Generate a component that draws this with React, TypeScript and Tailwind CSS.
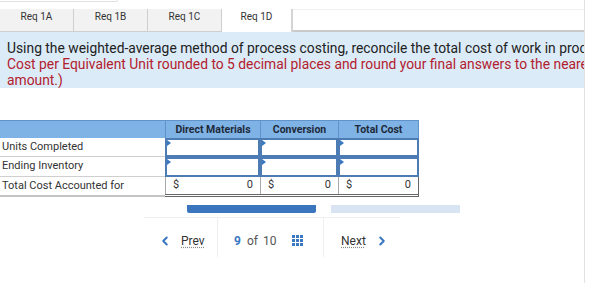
import { ChevronLeft, ChevronRight } from 'lucide-react';

const tabs = ['Req 1A', 'Req 1B', 'Req 1C', 'Req 1D'];

function InputCell() {
  return (
    <div className="relative h-full border-2 border-[#4d7bb3] bg-white">
      <span className="absolute left-0 top-0 h-0 w-0 border-y-[3px] border-l-[4px] border-y-transparent border-l-[#3a78c2]" />
    </div>
  );
}

function TotalCell() {
  return (
    <div className="flex h-full items-center justify-between border-l border-[#a9a9a9] px-[7px] text-[11px] text-[#333]">
      <span>$</span>
      <span>0</span>
    </div>
  );
}

function GridIcon() {
  return (
    <svg width="12" height="12" viewBox="0 0 12 12" className="fill-[#3a78c2]">
      {[0, 4, 8].map((y) =>
        [0, 4, 8].map((x) => <rect key={`${x}-${y}`} x={x} y={y} width="3" height="3" />)
      )}
    </svg>
  );
}

export default function App() {
  return (
    <div className="h-[283px] w-[589px] overflow-hidden bg-white font-['Roboto',sans-serif]">
      <div className="h-[283px] w-[585px] overflow-hidden border-r border-[#e2e2e2]">
        {/* leftover of box above */}
        <div className="h-[9px]">
          <div className="h-[2px] w-[118px] rounded-br border-b border-r border-[#e0e0e0]" />
        </div>

        {/* tabs */}
        <div className="flex h-[23px]">
          {tabs.map((t, i) => (
            <div
              key={t}
              className={
                i === 3
                  ? 'w-[71px] border-r-2 border-[#d4d4d4] bg-white text-center text-[10px] text-[#333]'
                  : 'w-[74px] border-b border-r border-[#cfcfcf] bg-[#f2f2f2] text-center text-[10px] text-[#333]'
              }
            >
              {t}
            </div>
          ))}
          <div className="flex-1 border-b-2 border-t border-b-[#c9c9c9] border-t-[#f0f0f0] bg-white" />
        </div>

        {/* instructions */}
        <div className="h-[56px] overflow-hidden bg-[#dcebf8] pl-[7px] pt-[8px] text-[13.85px] leading-[16px]">
          <p className="whitespace-nowrap text-[#222]">
            Using the weighted-average method of process costing, reconcile the total cost of work in process.
          </p>
          <p className="whitespace-nowrap text-[#b3202e]">
            Cost per Equivalent Unit rounded to 5 decimal places and round your final answers to the nearest dollar
          </p>
          <p className="text-[#b3202e]">amount.)</p>
        </div>

        {/* table */}
        <div className="mt-[32px] grid w-[419px] grid-cols-[165px_95px_78px_81px] grid-rows-[18px_19px_20px_20px]">
          <div className="border-t border-[#5f93c9] bg-[#7fb2e5]" />
          <div className="flex items-center justify-center border-l border-t border-[#5f93c9] bg-[#7fb2e5] text-[10.5px] font-bold text-[#1e2a3a]">
            Direct Materials
          </div>
          <div className="flex items-center justify-center border-l border-t border-[#5f93c9] bg-[#7fb2e5] text-[10.5px] font-bold text-[#1e2a3a]">
            Conversion
          </div>
          <div className="flex items-center justify-center border-l border-r border-t border-[#5f93c9] bg-[#7fb2e5] text-[10.5px] font-bold text-[#1e2a3a]">
            Total Cost
          </div>

          <div className="flex items-center border-b border-[#cfcfcf] pl-[2px] text-[11px] text-[#333]">Units Completed</div>
          <InputCell />
          <InputCell />
          <InputCell />

          <div className="flex items-center border-b border-[#cfcfcf] pl-[2px] text-[11px] text-[#333]">Ending Inventory</div>
          <InputCell />
          <InputCell />
          <InputCell />

          <div className="flex items-center border-b-2 border-[#c4c4c4] pl-[2px] text-[11px] text-[#333]">
            Total Cost Accounted for
          </div>
          <div className="border-b-[3px] border-double border-[#666]">
            <TotalCell />
          </div>
          <div className="border-b-[3px] border-double border-[#666]">
            <TotalCell />
          </div>
          <div className="border-b-[3px] border-r border-double border-[#666]">
            <TotalCell />
          </div>
        </div>

        {/* buttons peeking */}
        <div className="mt-[8px] flex h-[8px] gap-[15px] pl-[187px]">
          <div className="w-[129px] rounded-b-[2px] bg-[#3a75bd]" />
          <div className="w-[129px] bg-[#d8e4f1]" />
        </div>

        {/* pagination */}
        <div className="ml-[144px] mt-[4px] flex h-[40px] w-[256px] border-t border-[#efefef]">
          <div className="flex w-[74px] items-center gap-[9px] border-r border-[#efefef] pl-[14px] pt-[7px] text-[12px] text-[#333]">
            <ChevronLeft size={14} strokeWidth={3.5} className="text-[#3a78c2]" />
            <span className="underline decoration-dotted decoration-[#888] underline-offset-2">Prev</span>
          </div>
          <div className="flex w-[106px] items-center border-r border-[#efefef] pl-[16px] pt-[7px] text-[12px] text-[#555]">
            <span className="font-bold text-[#3a78c2]">9</span>
            <span className="ml-[6px]">of</span>
            <span className="ml-[5px]">10</span>
            <span className="ml-[16px]">
              <GridIcon />
            </span>
          </div>
          <div className="flex items-center gap-[9px] pl-[17px] pt-[7px] text-[12px] text-[#333]">
            <span className="underline decoration-dotted decoration-[#888] underline-offset-2">Next</span>
            <ChevronRight size={14} strokeWidth={3.5} className="text-[#3a78c2]" />
          </div>
        </div>
      </div>
    </div>
  );
}
